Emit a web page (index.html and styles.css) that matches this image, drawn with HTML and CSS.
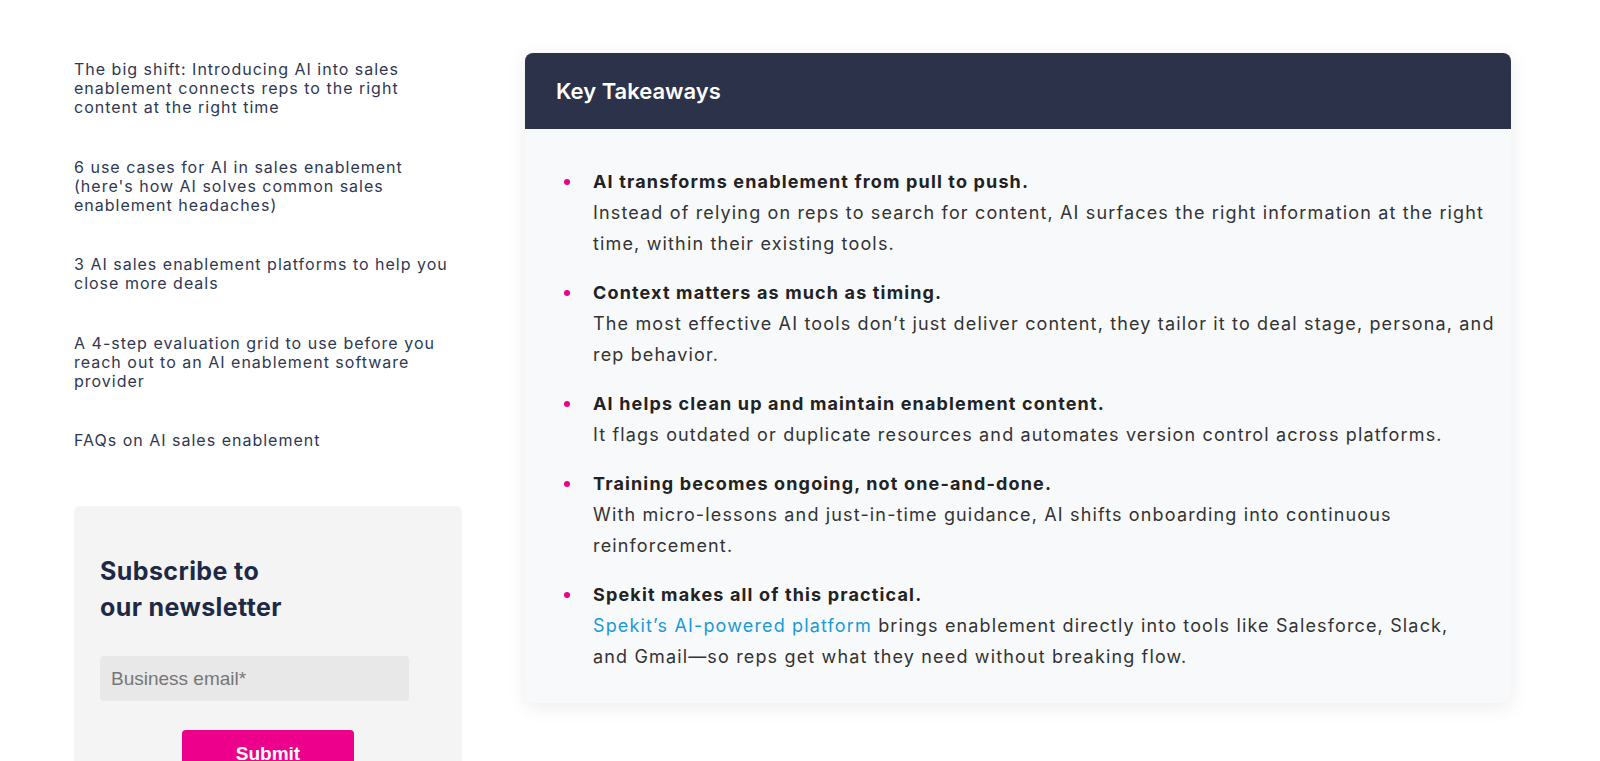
FILE: index.html
```html
<!DOCTYPE html>
<html lang="en">
<head>
<meta charset="UTF-8" />
<meta name="viewport" content="width=device-width, initial-scale=1.0"/>
<title>AI Sales Enablement</title>
<link rel="stylesheet" href="styles.css">
</head>
<body>

<div class="page">

<aside class="sidebar">
<ul class="toc">
<li><a href="#">The big shift: Introducing AI into sales enablement connects reps to the right content at the right time</a></li>
<li><a href="#">6 use cases for AI in sales enablement (here's how AI solves common sales enablement headaches)</a></li>
<li><a href="#">3 AI sales enablement platforms to help you close more deals</a></li>
<li><a href="#">A 4-step evaluation grid to use before you reach out to an AI enablement software provider</a></li>
<li><a href="#">FAQs on AI sales enablement</a></li>
</ul>

<div class="newsletter">
<h3>Subscribe to<br>our newsletter</h3>
<input type="email" placeholder="Business email*" />
<div class="submit-row">
<button>Submit</button>
</div>
</div>
</aside>

<div class="takeaways">
<div class="takeaways-head">Key Takeaways</div>
<ul class="takeaways-list">
<li>
<div>
<strong>AI transforms enablement from pull to push.</strong>
Instead of relying on reps to search for content, AI surfaces the right information at the right time, within their existing tools.
</div>
</li>
<li>
<div>
<strong>Context matters as much as timing.</strong>
The most effective AI tools don’t just deliver content, they tailor it to deal stage, persona, and rep behavior.
</div>
</li>
<li>
<div>
<strong>AI helps clean up and maintain enablement content.</strong>
It flags outdated or duplicate resources and automates version control across platforms.
</div>
</li>
<li>
<div>
<strong>Training becomes ongoing, not one-and-done.</strong>
With micro-lessons and just-in-time guidance, AI shifts onboarding into continuous reinforcement.
</div>
</li>
<li>
<div>
<strong>Spekit makes all of this practical.</strong>
<a href="#">Spekit’s AI-powered platform</a> brings enablement directly into tools like Salesforce, Slack, <span class="nowrap">and Gmail</span>—so reps get what they need without breaking flow.
</div>
</li>
</ul>
</div>

</div>

</body>
</html>
```

FILE: styles.css
```css
* {
box-sizing: border-box;
}
body {
margin: 0;
background-color: #fff;
font-family: 'Inter', 'Noto Sans', sans-serif;
overflow: hidden;
}

.page {
display: flex;
align-items: flex-start;
gap: 63px;
padding: 53px 0 0 74px;
}

/* sidebar */
.sidebar {
width: 388px;
flex-shrink: 0;
padding-top: 7px;
}

.toc {
list-style: none;
margin: 0;
padding: 0;
}

.toc li {
margin-bottom: 40px;
}

.toc li:last-child {
margin-bottom: 0;
}

.toc a {
display: block;
font-size: 16px;
line-height: 19.2px;
letter-spacing: 1px;
color: #2f3852;
text-decoration: none;
}

.newsletter {
margin-top: 56px;
background-color: #f4f4f4;
border-radius: 6px;
padding: 47px 26px 40px;
}

.newsletter h3 {
margin: 0 0 31px;
font-size: 25px;
line-height: 36px;
letter-spacing: 0.4px;
font-weight: 700;
color: #1e2a45;
}

.newsletter input {
display: block;
width: 309px;
height: 45px;
border: none;
border-radius: 4px;
background-color: #e8e8e8;
padding: 0 11px;
font-family: 'Liberation Sans', Arial, sans-serif;
font-size: 19px;
color: #333;
}

.newsletter input::placeholder {
color: #777;
}

.submit-row {
display: flex;
justify-content: center;
margin-top: 29px;
}

.submit-row button {
width: 172px;
height: 48px;
border: none;
border-radius: 4px;
background-color: #ec008c;
color: #fff;
font-family: 'Liberation Sans', Arial, sans-serif;
font-size: 19px;
font-weight: 700;
cursor: pointer;
}

/* key takeaways card */
.takeaways {
width: 986px;
flex-shrink: 0;
background-color: #f8f9fb;
border-radius: 8px;
box-shadow: 0 4px 20px rgba(0, 0, 0, 0.08);
overflow: hidden;
}

.takeaways-head {
height: 76px;
display: flex;
align-items: center;
padding-left: 31px;
background-color: #2b3249;
color: #fff;
font-size: 22px;
font-weight: 600;
}

.takeaways-list {
list-style: none;
margin: 0;
padding: 37px 12px 31px 39px;
}

.takeaways-list li {
display: flex;
gap: 23px;
margin-bottom: 18px;
font-size: 18px;
line-height: 31px;
letter-spacing: 1.15px;
color: #333;
}

.takeaways-list li:last-child {
margin-bottom: 0;
}

.takeaways-list li::before {
content: "";
flex-shrink: 0;
width: 6px;
height: 6px;
margin-top: 13px;
border-radius: 50%;
background-color: #ec008c;
}

.takeaways-list strong {
display: block;
color: #222;
font-weight: 700;
}

.takeaways-list a {
color: #1a9ad6;
text-decoration: none;
}

.nowrap {
white-space: nowrap;
}
```
